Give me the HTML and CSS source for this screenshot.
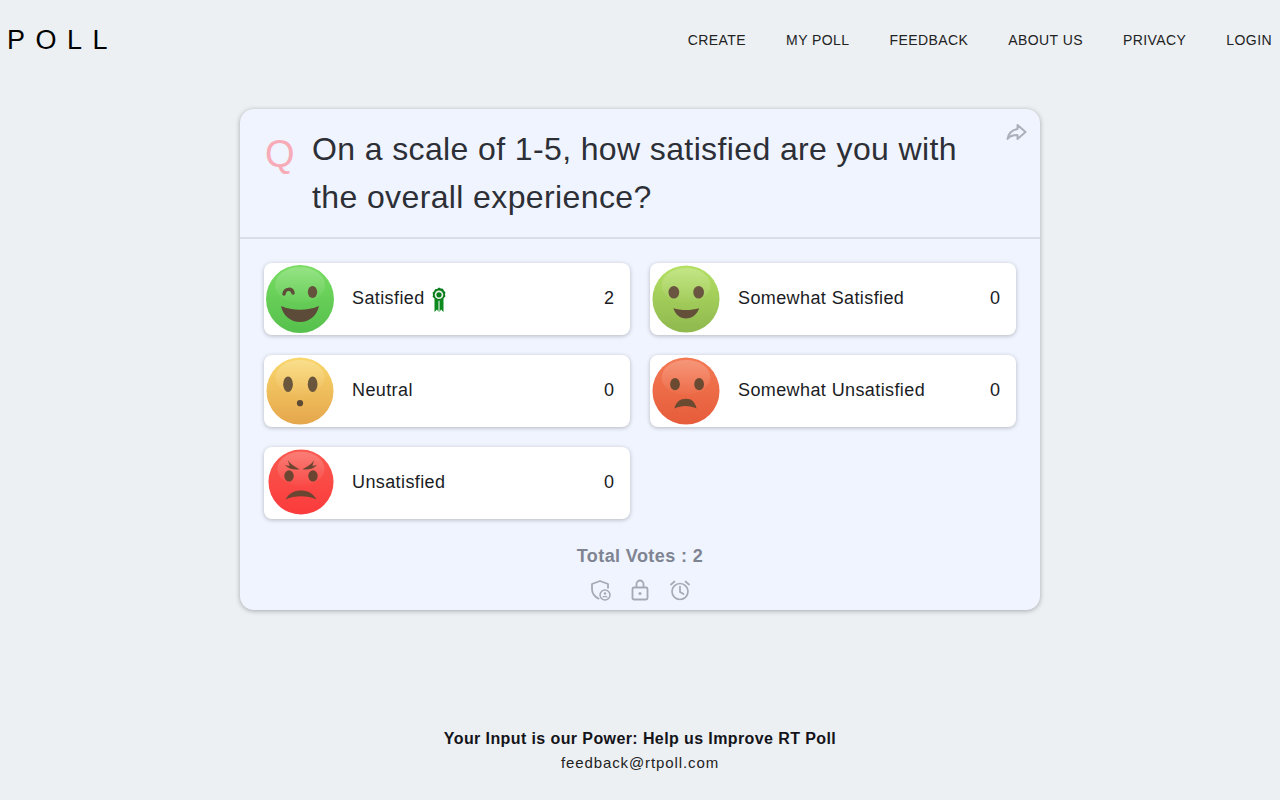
FILE: index.html
```html
<!DOCTYPE html>
<html lang="en">
<head>
<meta charset="utf-8">
<title>RT Poll</title>
<link rel="stylesheet" href="styles.css">
</head>
<body>
<svg class="defs" width="0" height="0" aria-hidden="true">
  <defs>
    <linearGradient id="g-green" x1="0" y1="0" x2="0" y2="1"><stop offset="0" stop-color="#78dc62"/><stop offset="1" stop-color="#55c04c"/></linearGradient>
    <linearGradient id="g-lime" x1="0" y1="0" x2="0" y2="1"><stop offset="0" stop-color="#b4e064"/><stop offset="1" stop-color="#8fb84e"/></linearGradient>
    <linearGradient id="g-yellow" x1="0" y1="0" x2="0" y2="1"><stop offset="0" stop-color="#f9d76c"/><stop offset="1" stop-color="#e5a64c"/></linearGradient>
    <linearGradient id="g-orange" x1="0" y1="0" x2="0" y2="1"><stop offset="0" stop-color="#f47a54"/><stop offset="1" stop-color="#e65c3b"/></linearGradient>
    <linearGradient id="g-red" x1="0" y1="0" x2="0" y2="1"><stop offset="0" stop-color="#f95a50"/><stop offset="1" stop-color="#fb3a3c"/></linearGradient>
    <linearGradient id="g-shine" x1="0" y1="0" x2="0" y2="1"><stop offset="0" stop-color="#fff" stop-opacity=".22"/><stop offset="1" stop-color="#fff" stop-opacity=".02"/></linearGradient>
  </defs>
</svg>
<header class="topbar">
  <div class="logo">POLL</div>
  <nav class="nav">
    <a>CREATE</a><a>MY POLL</a><a>FEEDBACK</a><a>ABOUT US</a><a>PRIVACY</a><a>LOGIN</a>
  </nav>
</header>
<main class="main">
  <section class="card">
    <div class="question">
      <span class="q-mark">Q</span>
      <h1 class="q-text">On a scale of 1-5, how satisfied are you with the overall experience?</h1>
      <svg class="share" viewBox="0 0 24 24" width="24" height="24"><path d="M13.500 5 21.500 12 13.500 19V15C9 15 5.500 16 3.500 19 4.500 13.500 8 10 13.500 9Z" fill="none" stroke="#aab0bc" stroke-width="2" stroke-linejoin="round"/></svg>
    </div>
    <div class="options">
      <div class="option">
        <svg class="face" viewBox="0 0 70 70"><circle cx="35" cy="35" r="34" fill="url(#g-green)"/><ellipse cx="35" cy="21" rx="25" ry="18" fill="url(#g-shine)"/><path d="M19 30c1-6 8-6 9-1" fill="none" stroke="#5f4d3a" stroke-width="3.500" stroke-linecap="round"/><ellipse cx="47.500" cy="28" rx="4.700" ry="6" fill="#64523c"/><path d="M16 42c12 5 26 5 38 0C52 52 44 58 35 58S18 52 16 42Z" fill="#5c4b38"/></svg>
        <span class="label">Satisfied</span>
        <svg class="badge" viewBox="0 0 14 25" width="14" height="25"><path d="M2.500 12 2.500 25 5 22.500 6.500 25V13ZM11.500 12V25L9 22.500 7.500 25V13Z" fill="#0c8a1e"/><path d="M7 .5l1.900 1 2.100.3.900 1.900 1.500 1.500-.4 2.100.4 2.100-1.500 1.500-.9 1.900-2.100.3-1.900 1-1.900-1-2.100-.3-.9-1.900L.6 9.900 1 7.800.6 5.700l1.500-1.500L3 2.300l2.100-.3Z" fill="#0c7d1c"/><circle cx="7" cy="7.800" r="4.300" fill="#e6f3e6"/><circle cx="7" cy="7.800" r="2.600" fill="#0c7d1c"/></svg>
        <span class="count">2</span>
      </div>
      <div class="option">
        <svg class="face face-sm" viewBox="0 0 70 70"><circle cx="35" cy="35" r="34.500" fill="url(#g-lime)"/><ellipse cx="35" cy="21" rx="25" ry="18" fill="url(#g-shine)"/><ellipse cx="22.500" cy="28" rx="5.500" ry="6.500" fill="#6a5640"/><ellipse cx="48" cy="28" rx="5.500" ry="6.500" fill="#6a5640"/><path d="M22 44.500c8 2.500 18 2.500 26.500 0C46.500 51 41 55 35 55S24 51 22 44.500Z" fill="#64503a"/></svg>
        <span class="label">Somewhat Satisfied</span>
        <span class="count">0</span>
      </div>
      <div class="option">
        <svg class="face face-sm" viewBox="0 0 70 70"><circle cx="35" cy="35" r="34.500" fill="url(#g-yellow)"/><ellipse cx="35" cy="21" rx="25" ry="18" fill="url(#g-shine)"/><ellipse cx="22.700" cy="28" rx="5" ry="8" fill="#6a563c"/><ellipse cx="48" cy="28" rx="5" ry="8" fill="#6a563c"/><circle cx="35" cy="47.500" r="3.200" fill="#5c4a34"/></svg>
        <span class="label">Neutral</span>
        <span class="count">0</span>
      </div>
      <div class="option">
        <svg class="face face-sm" viewBox="0 0 70 70"><circle cx="35" cy="35" r="34.500" fill="url(#g-orange)"/><ellipse cx="35" cy="21" rx="25" ry="18" fill="url(#g-shine)"/><ellipse cx="23.700" cy="28" rx="5" ry="6.300" fill="#6a4a30"/><ellipse cx="48.500" cy="28" rx="5" ry="6.300" fill="#6a4a30"/><path d="M23 53c2-7 6-10 12-10S44 46 46 53c-7-3.500-16-3.500-23 0Z" fill="#6a4a30"/></svg>
        <span class="label">Somewhat Unsatisfied</span>
        <span class="count">0</span>
      </div>
      <div class="option">
        <svg class="face face-xs" viewBox="0 0 70 70"><circle cx="35" cy="35" r="34.500" fill="url(#g-red)"/><ellipse cx="35" cy="21" rx="25" ry="18" fill="url(#g-shine)"/><path d="M21 12c3 4 7 7 12.500 9.500-6 1-12-.5-15.500-4.500 2 .5 4 1 5 1ZM49 12c-3 4-7 7-12.500 9.500 6 1 12-.5 15.500-4.500-2 .5-4 1-5 1Z" fill="#6a4632"/><ellipse cx="22.300" cy="28.600" rx="5" ry="6" fill="#6a4632"/><ellipse cx="47.700" cy="28.600" rx="5" ry="6" fill="#6a4632"/><path d="M18.500 53.500c4-7 10-9.500 16.500-9.500s12.500 2.500 16.500 9.500c-10-4.500-23-4.500-33 0Z" fill="#6a4632"/></svg>
        <span class="label">Unsatisfied</span>
        <span class="count">0</span>
      </div>
    </div>
    <div class="total">Total Votes : 2</div>
    <div class="meta-icons">
      <svg viewBox="0 0 24 24" width="24" height="24"><path d="M20 10.500V6L12 3 4 6v5c0 4.500 2.800 8 7.200 10" fill="none" stroke="#a3a9b5" stroke-width="1.800" stroke-linejoin="round"/><circle cx="17" cy="17" r="5" fill="none" stroke="#a3a9b5" stroke-width="1.500"/><circle cx="17" cy="15.500" r="1.200" fill="#a3a9b5"/><path d="M14.800 19.500c.5-1.500 3.900-1.500 4.400 0" fill="none" stroke="#a3a9b5" stroke-width="1.300"/></svg>
      <svg viewBox="0 0 24 24" width="24" height="24"><rect x="4.500" y="9.500" width="15" height="12" rx="1.500" fill="none" stroke="#a3a9b5" stroke-width="1.800"/><path d="M8.500 9.500V6a3.500 3.500 0 0 1 7 0v3.500" fill="none" stroke="#a3a9b5" stroke-width="1.800"/><circle cx="12" cy="15.500" r="1.500" fill="#a3a9b5"/></svg>
      <svg viewBox="0 0 24 24" width="24" height="24"><circle cx="12" cy="13.500" r="8" fill="none" stroke="#a3a9b5" stroke-width="1.700"/><path d="M12 8.500v5.500l3.500 2M3 6.500 6.500 3.500M21 6.500 17.500 3.500" fill="none" stroke="#a3a9b5" stroke-width="1.700" stroke-linecap="round"/></svg>
    </div>
  </section>
</main>
<footer class="footer">
  <div class="foot-title">Your Input is our Power: Help us Improve RT Poll</div>
  <div class="foot-mail">feedback@rtpoll.com</div>
</footer>
</body>
</html>
```
FILE: styles.css
```css
* { box-sizing: border-box; }
html, body { height: 100%; }
body {
  margin: 0;
  background: #ecf0f3;
  font-family: "Liberation Sans", Arial, sans-serif;
  color: #1c1c22;
  overflow: hidden;
}
.defs { position: absolute; }
.topbar {
  height: 80px;
  display: flex;
  align-items: center;
  justify-content: space-between;
  padding: 0 8px 0 7px;
}
.logo {
  font-size: 27px;
  letter-spacing: 10.5px;
  color: #000;
}
.nav { display: flex; gap: 40px; }
.nav a {
  font-size: 14px;
  letter-spacing: .42px;
  color: #222;
}
.main { display: flex; justify-content: center; padding-top: 29px; }
.card {
  width: 800px;
  height: 501px;
  background: #f0f4fe;
  border-radius: 14px;
  box-shadow: 0 1px 5px rgba(0,0,0,.3);
  display: flex;
  flex-direction: column;
}
.question {
  position: relative;
  display: flex;
  padding: 16px 60px 16px 24px;
  height: 130px;
  border-bottom: 2px solid #d9dee8;
}
.q-mark {
  font-size: 38px;
  color: #f7abb7;
  width: 48px;
  flex: none;
  line-height: 58px;
  padding-left: 1px;
}
.q-text {
  margin: 0;
  font-weight: 400;
  font-size: 32px;
  line-height: 48px;
  letter-spacing: .38px;
  color: #2d2f36;
}
.share { position: absolute; top: 11px; right: 12px; }
.options {
  display: grid;
  grid-template-columns: 366px 366px;
  column-gap: 20px;
  row-gap: 20px;
  padding: 24px 24px 0;
}
.option {
  height: 72px;
  background: #fff;
  border-radius: 8px;
  box-shadow: 0 1px 4px rgba(0,0,0,.25);
  display: flex;
  align-items: center;
  padding: 0 16px 0 1px;
}
.face { width: 70px; height: 70px; flex: none; margin: 0 17px 0 0; }
.face-sm { width: 68px; height: 68px; margin: 0 18px 0 1px; }
.face-xs { width: 66px; height: 66px; margin: 0 18.5px 3px 2.5px; }
.label { font-size: 18px; letter-spacing: .4px; color: #1a1c24; margin-bottom: 2px; }
.badge { margin-left: 7px; }
.count { margin-left: auto; font-size: 18px; color: #1a1c24; margin-bottom: 2px; }
.total {
  margin-top: 27px;
  text-align: center;
  font-size: 18px;
  font-weight: 700;
  letter-spacing: .4px;
  color: #7f8492;
}
.meta-icons { display: flex; justify-content: center; gap: 16px; margin-top: 11px; }
.footer { margin-top: 118px; text-align: center; }
.foot-title { font-size: 16px; font-weight: 700; letter-spacing: .4px; color: #14141a; line-height: 22px; }
.foot-mail { font-size: 15px; letter-spacing: .9px; color: #222; line-height: 26px; }
```
